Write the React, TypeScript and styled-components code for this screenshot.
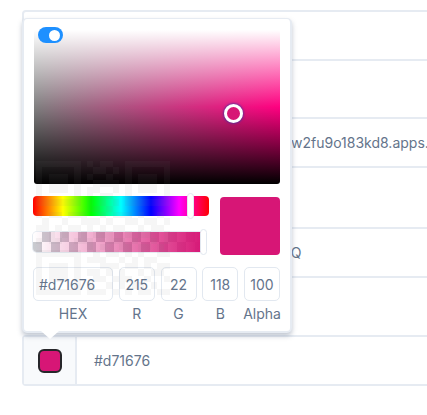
import React from 'react';
import styled, { createGlobalStyle } from 'styled-components';

const GlobalStyle = createGlobalStyle`
  html, body {
    margin: 0;
    padding: 0;
    background: #fff;
    overflow: hidden;
  }
  body {
    font-family: Inter, "Noto Sans", sans-serif;
    color: #64748b;
  }
`;

const Page = styled.div`
  position: relative;
  width: 427px;
  height: 415px;
  overflow: hidden;
  padding: 10px 0 0 22px;
  box-sizing: border-box;
`;

const Field = styled.div<{ $after: number }>`
  position: relative;
  display: flex;
  align-items: center;
  width: 520px;
  height: 51px;
  box-sizing: border-box;
  margin-bottom: ${(p) => p.$after}px;
  border: 2px solid #e6ebf2;
  border-radius: 4px;
  background: #fff;
`;

const FieldText = styled.span<{ $left: number }>`
  padding-left: ${(p) => p.$left}px;
  font-size: 14px;
  color: #64748b;
  white-space: nowrap;
`;

const Addon = styled.div`
  display: flex;
  align-items: center;
  justify-content: center;
  flex: none;
  width: 53px;
  height: 100%;
  box-sizing: border-box;
  background: #f8fafc;
  border-right: 2px solid #e6ebf2;
`;

const Chip = styled.div`
  width: 24px;
  height: 24px;
  box-sizing: border-box;
  border: 2px solid #26262a;
  border-radius: 6px;
  background: #d71676;
`;

// faint code image that shows through the picker
const QrMark = styled.svg`
  position: absolute;
  left: 36px;
  top: 161px;
  z-index: 3;
  width: 134px;
  height: 134px;
  pointer-events: none;
`;

const Popover = styled.div`
  position: absolute;
  left: -2px;
  bottom: calc(100% + 4px);
  z-index: 2;
  display: flex;
  flex-direction: column;
  width: 270px;
  height: 315px;
  box-sizing: border-box;
  padding: 11px 10px 0 9px;
  background: #fff;
  border: 2px solid #e6ebf2;
  border-top-width: 1px;
  border-radius: 5px;
  box-shadow: 0 3px 5px rgba(100, 116, 139, 0.4);

  &::after {
    content: '';
    position: absolute;
    left: 17px;
    bottom: -8px;
    border-left: 9px solid transparent;
    border-right: 9px solid transparent;
    border-top: 8px solid #fff;
  }
`;

const Toggle = styled.div`
  position: absolute;
  left: 14px;
  top: 8px;
  display: flex;
  align-items: center;
  justify-content: flex-end;
  width: 25px;
  height: 16px;
  padding-right: 3px;
  box-sizing: border-box;
  border-radius: 8px;
  background: #1e90ff;

  &::after {
    content: '';
    width: 11px;
    height: 11px;
    border-radius: 50%;
    background: #fff;
  }
`;

const Saturation = styled.div`
  position: relative;
  flex: none;
  height: 154px;
  margin-left: 1px;
  border-radius: 3px;
  background:
    linear-gradient(to bottom, #fff 0%, rgba(255, 255, 255, 0) 50%, rgba(0, 0, 0, 0) 50%, #000 100%),
    linear-gradient(to right, #808080, #ff0080);
`;

const Cursor = styled.div`
  position: absolute;
  left: 190px;
  top: 74px;
  width: 19px;
  height: 19px;
  box-sizing: border-box;
  border: 3px solid #fff;
  border-radius: 50%;
  background: #d71676;
  box-shadow: 0 0 2px 1px rgba(70, 50, 160, 0.7);
`;

const Controls = styled.div`
  display: grid;
  grid-template-columns: 176px 60px;
  justify-content: space-between;
  margin-top: 12px;
`;

const Sliders = styled.div`
  display: flex;
  flex-direction: column;
  gap: 16px;
`;

const Track = styled.div<{ $width: number }>`
  position: relative;
  width: ${(p) => p.$width}px;
  height: 20px;
  border-radius: 4px;
`;

const HueTrack = styled(Track)`
  background: linear-gradient(
    to right,
    #f00 0%,
    #ff0 17%,
    #0f0 33%,
    #0ff 50%,
    #00f 67%,
    #f0f 83%,
    #f00 100%
  );
`;

const AlphaTrack = styled(Track)`
  box-shadow: 0 0 0 1px #e6ebf2;
  background:
    linear-gradient(to right, rgba(215, 22, 118, 0), #d71676),
    repeating-conic-gradient(#c9ccd0 0% 25%, #fff 0% 50%) 0 0 / 18px 20px;
`;

const Thumb = styled.div<{ $left: number }>`
  position: absolute;
  left: ${(p) => p.$left}px;
  top: -3px;
  width: 7px;
  height: 26px;
  box-sizing: border-box;
  border: 1px solid #e2e8f0;
  border-radius: 4px;
  background: #fff;
`;

const Preview = styled.div`
  height: 58px;
  margin-top: 1px;
  border-radius: 4px;
  background: #d71676;
`;

const Inputs = styled.div`
  display: flex;
  justify-content: space-between;
  margin-top: 12px;
`;

const InputCol = styled.div<{ $width: number }>`
  display: flex;
  flex-direction: column;
  align-items: center;
  width: ${(p) => p.$width}px;
`;

const ValueBox = styled.div<{ $wide: boolean }>`
  display: flex;
  align-items: center;
  justify-content: ${(p) => (p.$wide ? 'flex-start' : 'center')};
  width: 100%;
  height: 34px;
  box-sizing: border-box;
  padding-left: ${(p) => (p.$wide ? 5 : 0)}px;
  border: 1.5px solid #e2e8f0;
  border-radius: 5px;
  font-size: 14px;
  color: #64748b;
`;

const Caption = styled.div`
  margin-top: 4px;
  font-size: 14px;
  line-height: 18px;
  color: #64748b;
  white-space: nowrap;
`;

const qrRows = [
  '111111101011001111111',
  '100000100110101000001',
  '101110101001001011101',
  '101110100111101011101',
  '101110101100101011101',
  '100000101011001000001',
  '111111101010101111111',
  '000000001101000000000',
  '101101110010111010010',
  '010010011101001101101',
  '110101101010110010110',
  '001010010111001011001',
  '101100111001110100101',
  '000000001010011011010',
  '111111100101101010011',
  '100000101110010101100',
  '101110100011101101011',
  '101110101101010010110',
  '101110100110111001001',
  '100000101001010110100',
  '111111101110101011011',
];

const channels = [
  { label: 'HEX', value: '#d71676', width: 80 },
  { label: 'R', value: '215', width: 36 },
  { label: 'G', value: '22', width: 36 },
  { label: 'B', value: '118', width: 36 },
  { label: 'Alpha', value: '100', width: 36 },
];

function App() {
  return (
    <Page>
      <GlobalStyle />
      <Field $after={56} />
      <Field $after={59}>
        <FieldText $left={27}>804317265-k9dhq3ltn7vbe5jrmc4tuw2fu9o183kd8.apps.googleusercontent.com</FieldText>
      </Field>
      <Field $after={57}>
        <FieldText $left={12}>GOCSPX-7hTqLm2xVd9RbKe4ZsYw1NQ</FieldText>
      </Field>
      <QrMark viewBox="0 0 21 21" shapeRendering="crispEdges">
        {qrRows.map((row, y) =>
          row.split('').map((cell, x) =>
            cell === '1' ? <rect key={`${x}-${y}`} x={x} y={y} width="1" height="1" fill="#808080" fillOpacity="0.07" /> : null
          )
        )}
      </QrMark>
      <Field $after={0}>
        <Addon>
          <Chip />
        </Addon>
        <FieldText $left={17}>#d71676</FieldText>
        <Popover>
          <Saturation>
            <Cursor />
          </Saturation>
          <Toggle />
          <Controls>
            <Sliders>
              <HueTrack $width={176}>
                <Thumb $left={154} />
              </HueTrack>
              <AlphaTrack $width={171}>
                <Thumb $left={167} />
              </AlphaTrack>
            </Sliders>
            <Preview />
          </Controls>
          <Inputs>
            {channels.map((c) => (
              <InputCol key={c.label} $width={c.width}>
                <ValueBox $wide={c.width > 36}>{c.value}</ValueBox>
                <Caption>{c.label}</Caption>
              </InputCol>
            ))}
          </Inputs>
        </Popover>
      </Field>
    </Page>
  );
}

export default App;
